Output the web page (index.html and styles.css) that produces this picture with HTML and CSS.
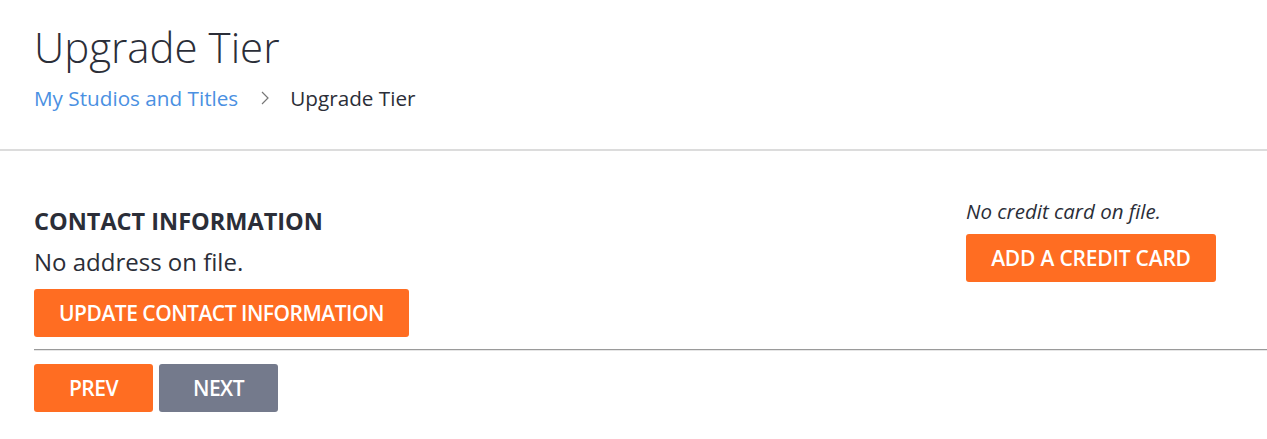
FILE: index.html
```html
<!DOCTYPE html>
<html lang="en">
<head>
  <meta charset="UTF-8">
  <meta name="viewport" content="width=device-width, initial-scale=1.0">
  <title>Upgrade Tier</title>
  <link rel="stylesheet" href="styles.css">
</head>
<body>

<div class="page-header">
  <h1>Upgrade Tier</h1>
  <div class="breadcrumb">
    <a href="#">My Studios and Titles</a>
    <svg class="crumb-sep" width="8" height="14" viewBox="0 0 8 14">
      <polyline points="1,1 7,7 1,13" fill="none" stroke="#777" stroke-width="1.2"/>
    </svg>
    <span class="crumb-current">Upgrade Tier</span>
  </div>
</div>

<div class="content">
  <div class="info-row">
    <!-- contact -->
    <div class="contact">
      <h2>CONTACT INFORMATION</h2>
      <p class="contact-text">No address on file.</p>
      <button class="btn btn-orange">UPDATE CONTACT INFORMATION</button>
    </div>
    <!-- credit card -->
    <div class="card-info">
      <p class="card-text">No credit card on file.</p>
      <button class="btn btn-orange btn-card">ADD A CREDIT CARD</button>
    </div>
  </div>

  <hr class="divider">

  <div class="nav-buttons">
    <button class="btn btn-orange btn-nav">PREV</button>
    <button class="btn btn-gray btn-nav">NEXT</button>
  </div>
</div>

</body>
</html>
```

FILE: styles.css
```css
/* general */
body {
  font-family: "Open Sans", Arial, sans-serif;
  color: #2b2e38;
  margin: 0;
  padding: 0;
  background: #fff;
}

.page-header {
  padding: 18px 34px 0;
  height: 131px;
  border-bottom: 2px solid #dcdcdc;
  box-sizing: content-box;
}
.page-header h1 {
  margin: 0;
  font-size: 42px;
  font-weight: 300;
  line-height: 58px;
}
.breadcrumb {
  display: flex;
  align-items: center;
  margin-top: 8px;
  font-size: 20.7px;
  line-height: 28px;
}
.breadcrumb a {
  color: #4a90e2;
  text-decoration: none;
}
.crumb-sep {
  margin: 0 21px 0 23px;
}

.content {
  padding: 46px 0 0 34px;
}
.info-row {
  display: flex;
  justify-content: space-between;
  align-items: flex-start;
}
.contact h2 {
  margin: 9px 0 0;
  font-size: 23.5px;
  font-weight: 700;
  line-height: 30px;
}
.contact-text {
  margin: 11px 0 12px;
  font-size: 24px;
  line-height: 30px;
}
.card-info {
  width: 301px;
}
.card-text {
  margin: 0 0 9px;
  font-size: 20.5px;
  font-style: italic;
  line-height: 28px;
}

.btn {
  display: block;
  font-family: "Open Sans", Arial, sans-serif;
  font-size: 21px;
  font-weight: 600;
  letter-spacing: -0.5px;
  color: #fff;
  border: none;
  border-radius: 3px;
  height: 48px;
  padding: 0 25px;
  cursor: pointer;
}
.btn-orange {
  background-color: #ff6d22;
}
.btn-gray {
  background-color: #747a8c;
}
.btn-card {
  width: 250px;
  padding: 0;
  letter-spacing: -0.2px;
}

.divider {
  margin: 12px 0 13px;
  border: none;
  border-top: 1px solid #9a9a9a;
  border-bottom: 1px solid #e6e6e6;
}
.nav-buttons {
  display: flex;
  gap: 6px;
}
.btn-nav {
  width: 119px;
  padding: 0;
}
```
